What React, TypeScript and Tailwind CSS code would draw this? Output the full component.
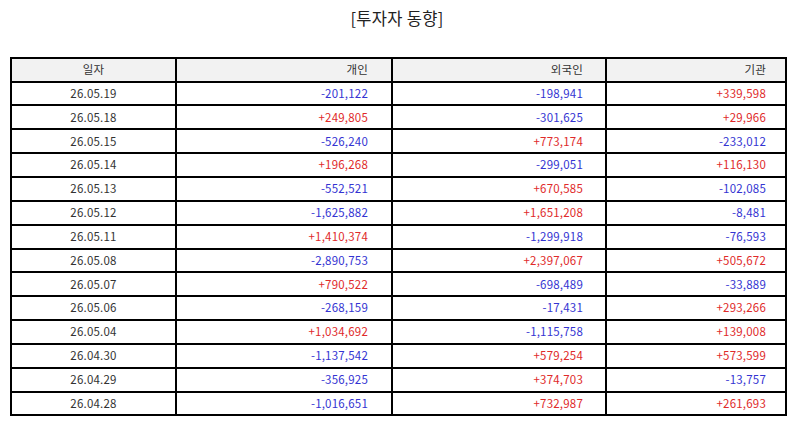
const rows: [string, string, string, string][] = [
  ['26.05.19', '-201,122', '-198,941', '+339,598'],
  ['26.05.18', '+249,805', '-301,625', '+29,966'],
  ['26.05.15', '-526,240', '+773,174', '-233,012'],
  ['26.05.14', '+196,268', '-299,051', '+116,130'],
  ['26.05.13', '-552,521', '+670,585', '-102,085'],
  ['26.05.12', '-1,625,882', '+1,651,208', '-8,481'],
  ['26.05.11', '+1,410,374', '-1,299,918', '-76,593'],
  ['26.05.08', '-2,890,753', '+2,397,067', '+505,672'],
  ['26.05.07', '+790,522', '-698,489', '-33,889'],
  ['26.05.06', '-268,159', '-17,431', '+293,266'],
  ['26.05.04', '+1,034,692', '-1,115,758', '+139,008'],
  ['26.04.30', '-1,137,542', '+579,254', '+573,599'],
  ['26.04.29', '-356,925', '+374,703', '-13,757'],
  ['26.04.28', '-1,016,651', '+732,987', '+261,693']
];

const Num = ({ value, pad }: { value: string; pad: string }) => (
  <td
    className={`border-2 border-black text-right ${pad} ${
      value.startsWith('-') ? 'text-[#3434d2]' : 'text-[#e02a2a]'
    }`}
  >
    {value}
  </td>
);

export default function App() {
  return (
    <div
      className="w-[794px] h-[425px] bg-white text-[#333]"
      style={{ fontFamily: '"Noto Sans CJK KR", "Noto Sans", sans-serif' }}
    >
      <div className="pt-[6px] h-[57px] text-center text-[16.5px] leading-[24px] tracking-[0.3px] text-[#222]">
        [투자자 동향]
      </div>
      <div className="px-[10px]">
        <table className="w-[775px] table-fixed border-collapse text-[11.5px] tracking-[0.2px]">
          <colgroup>
            <col className="w-[165px]" />
            <col className="w-[216px]" />
            <col className="w-[214px]" />
            <col className="w-[180px]" />
          </colgroup>
          <thead>
            <tr className="h-[23.6px] bg-[#f2f2f2]">
              <th className="border-2 border-black font-normal text-center">일자</th>
              <th className="border-2 border-black font-normal text-right pr-[23px]">개인</th>
              <th className="border-2 border-black font-normal text-right pr-[22px]">외국인</th>
              <th className="border-2 border-black font-normal text-right pr-[19px]">기관</th>
            </tr>
          </thead>
          <tbody>
            {rows.map(([date, ind, fgn, inst]) => (
              <tr key={date} className="h-[23.85px]">
                <td className="border-2 border-black text-center">{date}</td>
                <Num value={ind} pad="pr-[23px]" />
                <Num value={fgn} pad="pr-[22px]" />
                <Num value={inst} pad="pr-[19px]" />
              </tr>
            ))}
          </tbody>
        </table>
      </div>
    </div>
  );
}
